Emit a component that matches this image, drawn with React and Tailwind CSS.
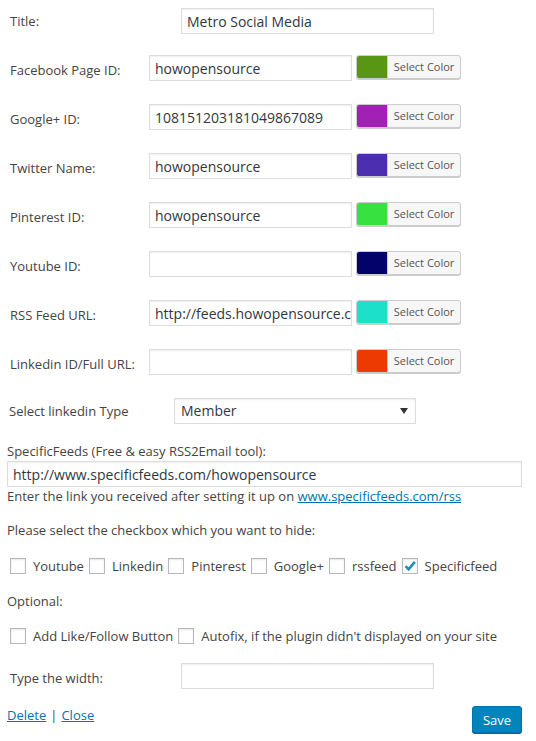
import React from 'react';

const socials = [
  { label: 'Facebook Page ID:', value: 'howopensource', color: '#589614' },
  { label: 'Google+ ID:', value: '108151203181049867089', color: '#a121b4' },
  { label: 'Twitter Name:', value: 'howopensource', color: '#4b2fb0' },
  { label: 'Pinterest ID:', value: 'howopensource', color: '#37e13f' },
  { label: 'Youtube ID:', value: '', color: '#02026a' },
  { label: 'RSS Feed URL:', value: 'http://feeds.howopensource.com/howopensource', color: '#1de0cb' },
  { label: 'Linkedin ID/Full URL:', value: '', color: '#ec3a02' },
];

const hideBoxes = [
  { label: 'Youtube', checked: false },
  { label: 'Linkedin', checked: false },
  { label: 'Pinterest', checked: false },
  { label: 'Google+', checked: false },
  { label: 'rssfeed', checked: false },
  { label: 'Specificfeed', checked: true },
];

function TextInput({ value, className = '' }) {
  return (
    <input
      type="text"
      readOnly
      value={value}
      className={`h-[26px] border border-[#ddd] bg-white shadow-[inset_0_1px_2px_rgba(0,0,0,0.07)] pl-[5px] pr-0 text-[14px] text-[#32373c] outline-none font-['Open_Sans',sans-serif] ${className}`}
    />
  );
}

function ColorButton({ color }) {
  return (
    <div className="ml-1 -mt-[3px] flex h-[24px] w-[105px] rounded-[3px] border border-[#ccc] bg-[#f7f7f7] shadow-[0_1px_0_#ccc] overflow-hidden">
      {/* swatch */}
      <div className="w-[30px] h-full" style={{ backgroundColor: color }} />
      <div className="flex-1 border-l border-[#ccc] flex items-center justify-center text-[11px] text-[#555]">
        Select Color
      </div>
    </div>
  );
}

function Checkbox({ checked }) {
  return (
    <span className="w-4 h-4 shrink-0 border border-[#b4b9be] bg-white shadow-[inset_0_1px_2px_rgba(0,0,0,0.1)] flex items-center justify-center">
      {checked && (
        <svg width="14" height="14" viewBox="0 0 14 14">
          <path d="M2.5 7.2 L5.6 10.3 L11.8 2.8" fill="none" stroke="#1e8cbe" strokeWidth="2.6" />
        </svg>
      )}
    </span>
  );
}

export default function App() {
  return (
    <div className="w-[536px] min-h-[741px] bg-white text-[13px] leading-[18px] text-[#444] font-['Open_Sans',sans-serif]">
      <div className="pt-2 pl-[7px] pr-[15px]">
        {/* Title */}
        <div className="flex items-center h-[26px]">
          <span className="w-[174px] pl-[3px]">Title:</span>
          <TextInput value="Metro Social Media" className="w-[253px]" />
        </div>

        {/* Social ids */}
        {socials.map((s, i) => (
          <div key={s.label} className={`flex items-center h-[26px] ${i === 0 ? 'mt-[21px]' : 'mt-[23px]'}`}>
            <span className="w-[142px] pl-[3px] pt-[3px]">{s.label}</span>
            <TextInput value={s.value} className="w-[203px]" />
            <ColorButton color={s.color} />
          </div>
        ))}

        {/* Linkedin type */}
        <div className="flex items-center h-[26px] mt-[23px]">
          <span className="w-[167px] pl-[2px]">Select linkedin Type</span>
          <div className="w-[242px] h-[26px] border border-[#ddd] bg-white shadow-[inset_0_1px_2px_rgba(0,0,0,0.07)] flex items-center justify-between pl-[6px] pr-[6px] text-[14px] text-[#32373c]">
            <span>Member</span>
            <svg width="8" height="6" viewBox="0 0 8 6" className="mr-[1px]">
              <path d="M0 0 H8 L4 6 Z" fill="#333" />
            </svg>
          </div>
        </div>

        {/* SpecificFeeds */}
        <div className="mt-[18px]">SpecificFeeds (Free &amp; easy RSS2Email tool):</div>
        <TextInput value="http://www.specificfeeds.com/howopensource" className="block w-[515px] mt-px" />
        <div>
          Enter the link you received after setting it up on{' '}
          <a href="#" className="text-[#0073aa] underline">www.specificfeeds.com/rss</a>
        </div>

        <div className="mt-[16px]">Please select the checkbox which you want to hide:</div>

        <div className="flex items-center h-[26px] mt-[14px] pl-[3px]">
          {hideBoxes.map((b) => (
            <div key={b.label} className="flex items-center mr-[5px]">
              <Checkbox checked={b.checked} />
              <span className="ml-[7px]">{b.label}</span>
            </div>
          ))}
        </div>

        <div className="mt-[13px]">Optional:</div>

        <div className="flex items-center h-[26px] mt-[13px] pl-[3px]">
          <div className="flex items-center mr-[5px]">
            <Checkbox />
            <span className="ml-[7px]">Add Like/Follow Button</span>
          </div>
          <div className="flex items-center">
            <Checkbox />
            <span className="ml-[7px]">Autofix, if the plugin didn't displayed on your site</span>
          </div>
        </div>

        <div className="flex items-center h-[26px] mt-[14px]">
          <span className="w-[174px] pl-[3px] pt-[3px]">Type the width:</span>
          <TextInput value="" className="w-[253px]" />
        </div>

        {/* Footer */}
        <div className="flex justify-between items-start mt-[17px]">
          <div>
            <a href="#" className="text-[#0073aa] underline">Delete</a>
            <span className="mx-[4px]">|</span>
            <a href="#" className="text-[#0073aa] underline">Close</a>
          </div>
          <button className="w-[50px] h-[27px] mr-[-1px] rounded-[3px] border border-[#0073aa] bg-[#0085ba] shadow-[0_1px_0_#006799] text-white text-[13px]">
            Save
          </button>
        </div>
      </div>
    </div>
  );
}
